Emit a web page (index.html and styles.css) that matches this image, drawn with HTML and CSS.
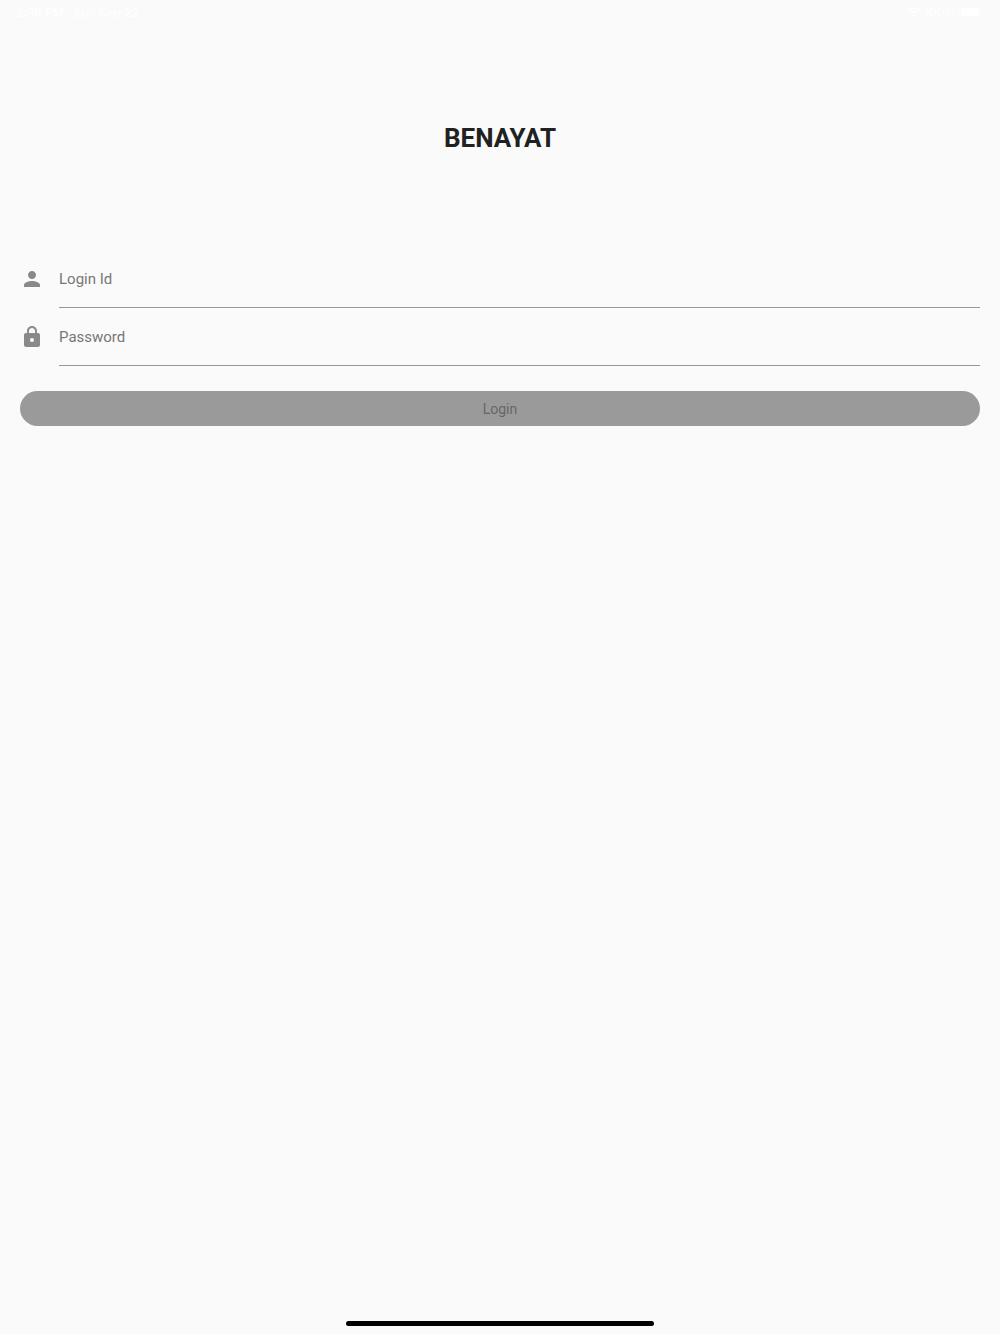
FILE: index.html
```html
<!DOCTYPE html>
<html lang="en">
<head>
    <meta charset="UTF-8">
    <meta name="viewport" content="width=device-width, initial-scale=1.0">
    <title>Benayat</title>
    <link rel="stylesheet" href="styles.css">
</head>
<body>
    <header class="status-bar">
        <div class="status-group status-left">
            <span>2:38 PM</span>
            <span>Sun Sep 22</span>
        </div>
        <div class="status-group">
            <svg class="wifi" viewBox="0 0 14 10" aria-hidden="true">
                <path d="M1 3.6a8.6 8.6 0 0 1 12 0M3.2 6a5.4 5.4 0 0 1 7.6 0" fill="none" stroke="currentColor" stroke-width="1.7"/>
                <path d="M7 10 5 7.9a2.9 2.9 0 0 1 4 0z" fill="currentColor"/>
            </svg>
            <span>100%</span>
            <svg class="battery" viewBox="0 0 25 12" aria-hidden="true">
                <rect x=".5" y=".5" width="21" height="11" rx="3" fill="none" stroke="currentColor" opacity=".4"/>
                <rect x="2" y="2" width="18" height="8" rx="1.5" fill="currentColor"/>
                <path d="M23 4v4a2.2 2.2 0 0 0 0-4z" fill="currentColor" opacity=".4"/>
            </svg>
        </div>
    </header>
    <main class="login">
        <h1>BENAYAT</h1>
        <form class="login-form">
            <div class="field">
                <label for="loginId">
                    <svg class="icon" viewBox="0 0 24 24" role="img" aria-label="Login Id">
                        <path d="M12 12c2.21 0 4-1.79 4-4s-1.79-4-4-4-4 1.79-4 4 1.79 4 4 4zm0 2c-2.67 0-8 1.34-8 4v2h16v-2c0-2.66-5.33-4-8-4z"/>
                    </svg>
                </label>
                <input type="text" id="loginId" placeholder="Login Id">
            </div>
            <div class="field">
                <label for="password">
                    <svg class="icon" viewBox="0 0 24 24" role="img" aria-label="Password">
                        <path d="M18 8h-1V6c0-2.76-2.24-5-5-5S7 3.24 7 6v2H6c-1.1 0-2 .9-2 2v10c0 1.1.9 2 2 2h12c1.1 0 2-.9 2-2V10c0-1.1-.9-2-2-2zm-6 9c-1.1 0-2-.9-2-2s.9-2 2-2 2 .9 2 2-.9 2-2 2zm3.1-9H8.9V6c0-1.71 1.39-3.1 3.1-3.1s3.1 1.39 3.1 3.1v2z"/>
                    </svg>
                </label>
                <input type="password" id="password" placeholder="Password">
            </div>
            <button type="submit" class="login-button" disabled>Login</button>
        </form>
    </main>
    <div class="home-indicator"></div>
</body>
</html>
```

FILE: styles.css
```css
* {
    box-sizing: border-box;
}
body {
    min-height: 100vh;
    margin: 0;
    display: flex;
    flex-direction: column;
    background-color: #fafafa;
    color: #212121;
    font-family: Roboto, "Liberation Sans", sans-serif;
}
.status-bar {
    display: flex;
    justify-content: space-between;
    height: 24px;
    padding: 0 16px;
    color: #fff;
    font-family: Inter, "Liberation Sans", sans-serif;
    font-size: 12px;
}
.status-group {
    display: flex;
    align-items: center;
    gap: 3px;
}
.status-left {
    gap: 10px;
}
.wifi {
    width: 14px;
    height: 10px;
}
.battery {
    width: 25px;
    height: 12px;
}
.login {
    flex: 1;
    padding: 97px 20px 0;
}
h1 {
    margin: 0;
    font-size: 26px;
    font-weight: 700;
    line-height: 34px;
    text-align: center;
}
.login-form {
    margin-top: 95px;
}
.field {
    display: flex;
    height: 58px;
}
.field label {
    width: 39px;
    padding-top: 17px;
}
.icon {
    display: block;
    width: 24px;
    height: 24px;
    fill: #898989;
}
.field input {
    flex: 1;
    min-width: 0;
    padding: 0;
    border: none;
    border-bottom: 1px solid #979797;
    border-radius: 0;
    background: none;
    color: #212121;
    font-family: inherit;
    font-size: 15px;
    outline: none;
}
.field input::placeholder {
    color: #777;
    opacity: 1;
}
.login-button {
    display: block;
    width: 100%;
    height: 35px;
    margin-top: 25px;
    border: none;
    border-radius: 18px;
    background-color: #9a9a9a;
    color: #666;
    font-family: inherit;
    font-size: 14px;
}
.home-indicator {
    width: 308px;
    height: 5px;
    margin: 0 auto 8px;
    border-radius: 3px;
    background-color: #000;
}
```
